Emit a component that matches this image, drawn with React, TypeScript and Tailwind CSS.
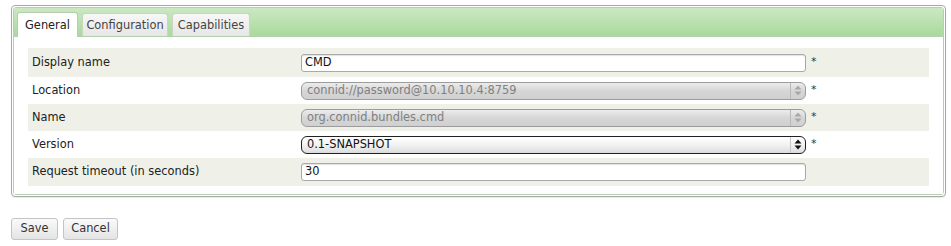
import React from "react";

const font = { fontFamily: '"DejaVu Sans", Verdana, sans-serif' };

function Arrows({ dark }: { dark: boolean }) {
  const c = dark ? "#111" : "#a8a8a8";
  return (
    <svg width="8" height="11" viewBox="0 0 8 11">
      <polygon points="4,0.5 7.5,4.5 0.5,4.5" fill={c} />
      <polygon points="4,10.5 7.5,6.5 0.5,6.5" fill={c} />
    </svg>
  );
}

function Select({ value, disabled }: { value: string; disabled?: boolean }) {
  return (
    <div
      className={
        "flex h-[18px] w-[505px] items-stretch rounded-[6px] border " +
        (disabled
          ? "border-[#9c9c9c] bg-gradient-to-b from-[#ececec] via-[#d6d6d6] to-[#d0d0d0] text-[#808080]"
          : "border-[#202020] bg-gradient-to-b from-[#ffffff] via-[#f2f2f2] to-[#dcdcdc] text-[#111]")
      }
    >
      <div className="flex flex-1 items-center pl-[5px] text-[11.4px] leading-none">{value}</div>
      <div
        className={
          "flex w-[15px] items-center justify-center border-l " +
          (disabled ? "border-[#b9b9b9]" : "border-[#c8c8c8]")
        }
      >
        <Arrows dark={!disabled} />
      </div>
    </div>
  );
}

function Input({ value }: { value: string }) {
  return (
    <div className="flex h-[18px] w-[505px] items-center rounded-[3px] border border-[#a9a9a9] bg-white pl-[3px] text-[11.4px] leading-none text-[#111] shadow-[inset_0_1px_1px_rgba(0,0,0,0.12)]">
      {value}
    </div>
  );
}

function Row({
  label,
  shaded,
  required,
  h,
  children,
}: {
  label: string;
  shaded: boolean;
  required: boolean;
  h: string;
  children: React.ReactNode;
}) {
  return (
    <div className={"flex items-center " + h + " " + (shaded ? "bg-[#eff1e9]" : "bg-white")}>
      <div className="w-[273px] pl-[4px] text-[11.4px] text-[#222]">{label}</div>
      {children}
      {required && <span className="ml-[5px] text-[11px] text-[#333]">*</span>}
    </div>
  );
}

export default function App() {
  return (
    <div className="h-[246px] w-[951px] bg-white" style={font}>
      <div className="pl-[11px] pr-[5px] pt-[5px]">
        <div className="rounded-[4px] border border-[#a4aaa1] p-[1px] shadow-[0_1px_1px_rgba(0,0,0,0.08)]">
          <div className="rounded-[3px] border border-[#b9cdb2]">
            <div className="flex h-[29px] items-end gap-[4px] rounded-t-[2px] border-b border-[#b4cfac] bg-gradient-to-b from-[#cbe8c3] to-[#a9da9c] pl-[3px]">
              <div className="-mb-px flex h-[25px] w-[61px] items-center justify-center rounded-t-[3px] border border-b-0 border-[#b7cdb0] bg-white pt-[1px] text-[11.4px] text-[#222]">
                General
              </div>
              <div className="flex h-[23px] w-[86px] items-center justify-center rounded-t-[3px] border border-b-0 border-[#c6d6c1] bg-gradient-to-b from-[#f7f7f7] to-[#e6e6e6] pt-[1px] text-[11.4px] text-[#444]">
                Configuration
              </div>
              <div className="flex h-[23px] w-[78px] items-center justify-center rounded-t-[3px] border border-b-0 border-[#c6d6c1] bg-gradient-to-b from-[#f7f7f7] to-[#e6e6e6] pt-[1px] text-[11.4px] text-[#444]">
                Capabilities
              </div>
            </div>
            <div className="bg-white px-[14px] pb-[8px] pt-[11px]">
              <Row label="Display name" shaded required h="h-[29px]">
                <Input value="CMD" />
              </Row>
              <Row label="Location" shaded={false} required h="h-[27px]">
                <Select value="connid://password@10.10.10.4:8759" disabled />
              </Row>
              <Row label="Name" shaded required h="h-[27px]">
                <Select value="org.connid.bundles.cmd" disabled />
              </Row>
              <Row label="Version" shaded={false} required h="h-[27px]">
                <Select value="0.1-SNAPSHOT" />
              </Row>
              <Row label="Request timeout (in seconds)" shaded required={false} h="h-[28px]">
                <Input value="30" />
              </Row>
            </div>
          </div>
        </div>
      </div>
      <div className="mt-[21px] flex gap-[5px] pl-[11px]">
        <button className="h-[22px] w-[47px] rounded-[3px] border border-[#c4c4c4] bg-gradient-to-b from-[#fafafa] to-[#e4e4e4] text-[11.4px] text-[#333]">
          Save
        </button>
        <button className="h-[22px] w-[55px] rounded-[3px] border border-[#c4c4c4] bg-gradient-to-b from-[#fafafa] to-[#e4e4e4] text-[11.4px] text-[#333]">
          Cancel
        </button>
      </div>
    </div>
  );
}
